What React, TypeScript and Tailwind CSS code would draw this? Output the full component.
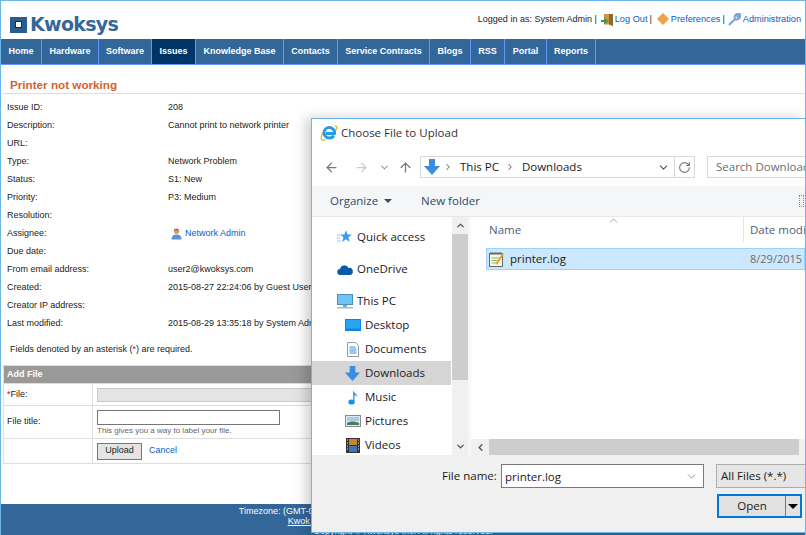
import { ArrowLeft, ArrowRight, ArrowUp, ChevronDown, ChevronLeft, ChevronRight, ChevronUp, RotateCw } from "lucide-react";

const navItems = [
  { label: "Home", width: "w-[41px]" },
  { label: "Hardware", width: "w-[57px]" },
  { label: "Software", width: "w-[53px]" },
  { label: "Issues", width: "w-[44px]", active: true },
  { label: "Knowledge Base", width: "w-[88px]" },
  { label: "Contacts", width: "w-[54px]" },
  { label: "Service Contracts", width: "w-[92px]" },
  { label: "Blogs", width: "w-[41px]" },
  { label: "RSS", width: "w-[34px]" },
  { label: "Portal", width: "w-[42px]" },
  { label: "Reports", width: "w-[49px]" },
];

const issueRows: [string, React.ReactNode][] = [
  ["Issue ID:", "208"],
  ["Description:", "Cannot print to network printer"],
  ["URL:", ""],
  ["Type:", "Network Problem"],
  ["Status:", "S1: New"],
  ["Priority:", "P3: Medium"],
  ["Resolution:", ""],
  ["Assignee:", <AssigneeLink key="assignee" />],
  ["Due date:", ""],
  ["From email address:", "user2@kwoksys.com"],
  ["Created:", "2015-08-27 22:24:06 by Guest User"],
  ["Creator IP address:", ""],
  ["Last modified:", "2015-08-29 13:35:18 by System Admin"],
];

function AssigneeLink() {
  return (
    <span className="flex items-center gap-[3px] pl-[3px] text-[#0b5cc4]">
      <svg width="11" height="12" viewBox="0 0 11 12">
        <circle cx="5.5" cy="3.2" r="2.6" fill="#d39a6e" />
        <path d="M2.700 3C2.500.2 8.500.2 8.300 3L7 2H4Z" fill="#8a4b20" />
        <path d="M.5 11.500C.5 7.500 3 6.500 5.500 6.500S10.500 7.500 10.500 11.500Z" fill="#5c93d6" />
      </svg>
      Network Admin
    </span>
  );
}

function DownloadIcon({ size = 18 }: { size?: number }) {
  return (
    <svg width={size} height={size} viewBox="0 0 18 18">
      <path d="M6 1h6v7h5l-8 9-8-9h5z" fill="#3b8de0" />
    </svg>
  );
}

function IeLogo() {
  return (
    <svg width="18" height="18" viewBox="0 0 18 18">
      <path d="M15 2.500c2.500-1 2.500 1.500.5 4M3 8.500C.3 13 .3 18 5.500 15.500" fill="none" stroke="#f2b632" strokeWidth="1.400" />
      <path d="M13.800 11.500A5.300 5.300 0 1 1 14.500 9.500H6" fill="none" stroke="#2b9be0" strokeWidth="3" />
    </svg>
  );
}

function TreeRow({ icon, label, indent, selected }: { icon: React.ReactNode; label: string; indent?: boolean; selected?: boolean }) {
  return (
    <div className={`mr-[1px] flex h-[24px] shrink-0 items-center ${indent ? "pl-[32px]" : "pl-[24px]"} ${selected ? "bg-[#d5d5d5]" : ""}`}>
      <span className="flex w-[20px] justify-center pr-[3px]">{icon}</span>
      <span className="ml-[1px] text-[#1a1a2a]">{label}</span>
    </div>
  );
}

function FileDialog() {
  return (
    <div className="absolute left-[310px] top-[117px] flex h-[415px] w-[495px] flex-col border border-[#6cb6e8] bg-white font-['Open_Sans',sans-serif] text-[11.5px] text-[#1a1a1a] shadow-[-5px_0_12px_rgba(0,0,0,0.2)]">
      <div className="flex h-[30px] shrink-0 items-center gap-[3px] pb-[2px] pl-[8px] text-[#333]">
        <IeLogo />
        Choose File to Upload
      </div>

      <div className="flex h-[37px] shrink-0 items-center pb-[1px] pl-[12px]">
        <ArrowLeft size={15} strokeWidth={2} className="text-[#777]" />
        <ArrowRight size={15} strokeWidth={2} className="ml-[15px] text-[#ccc]" />
        <ChevronDown size={11} strokeWidth={2.5} className="ml-[10px] text-[#999]" />
        <ArrowUp size={15} strokeWidth={2} className="ml-[8px] text-[#777]" />
        <div className="ml-[7px] flex h-[22px] w-[275px] items-center border border-[#d9d9d9]">
          <span className="ml-[2px]"><DownloadIcon /></span>
          <ChevronRight size={10} strokeWidth={2.5} className="ml-[2px] text-[#777]" />
          <span className="ml-[7px]">This PC</span>
          <ChevronRight size={10} strokeWidth={2.5} className="ml-[6px] text-[#777]" />
          <span className="ml-[7px]">Downloads</span>
          <ChevronDown size={13} strokeWidth={2} className="ml-auto mr-[4px] text-[#555]" />
          <span className="flex h-full w-[20px] items-center justify-center border-l border-[#d9d9d9]">
            <RotateCw size={13} strokeWidth={2} className="text-[#777]" />
          </span>
        </div>
        <div className="ml-[12px] flex h-[22px] flex-1 items-center overflow-hidden whitespace-nowrap border border-r-0 border-[#d9d9d9] pl-[8px] text-[#6d6d6d]">
          Search Downloads
        </div>
      </div>

      <div className="flex h-[31px] shrink-0 items-center border-b border-[#e8e8e8] bg-[#f5f6f7] pl-[18px] text-[#2d4a6a]">
        <span>Organize</span>
        <span className="ml-[6px] h-0 w-0 border-x-[4px] border-t-[4px] border-x-transparent border-t-[#2d4a6a]" />
        <span className="ml-[29px]">New folder</span>
        <span className="ml-auto mr-[1px] h-[12px] w-[5px] border border-dotted border-[#888]" />
      </div>

      <div className="flex min-h-0 flex-1">
        <div className="flex w-[156px] shrink-0">
          <div className="flex w-[140px] flex-col overflow-hidden pt-[8px]">
            <TreeRow
              icon={
                <svg width="15" height="14" viewBox="0 0 15 14">
                  <path d="M9 0l1.500 4.500H15l-3.600 2.800L12.800 12 9 9.200 5 12l1.500-4.700L3 4.500h4.500Z" fill="#3d9be8" />
                  <path d="M0 5h3M0 8h3M0 11h4" stroke="#8cc6f2" />
                </svg>
              }
              label="Quick access"
            />
            <div className="h-[8px] shrink-0" />
            <TreeRow
              icon={
                <svg width="16" height="11" viewBox="0 0 16 11">
                  <path d="M3.500 11A3 3 0 0 1 3 5a4.500 4.500 0 0 1 8.500-1A3.500 3.500 0 0 1 13 11Z" fill="#0c5aa8" />
                </svg>
              }
              label="OneDrive"
            />
            <div className="h-[8px] shrink-0" />
            <TreeRow
              icon={
                <svg width="16" height="15" viewBox="0 0 16 15">
                  <rect x="0.500" y="0.500" width="15" height="10" fill="#6fc4f5" stroke="#4d8fb8" />
                  <rect x="6" y="11" width="4" height="2" fill="#8aa8bd" />
                  <rect x="0" y="13" width="16" height="1.500" fill="#a8bccb" />
                </svg>
              }
              label="This PC"
            />
            <TreeRow
              indent
              icon={
                <svg width="16" height="12" viewBox="0 0 16 12">
                  <rect width="16" height="12" fill="#0f84e4" />
                  <rect x="1" y="1" width="14" height="8.500" fill="#29a4f2" />
                </svg>
              }
              label="Desktop"
            />
            <TreeRow
              indent
              icon={
                <svg width="12" height="15" viewBox="0 0 12 15">
                  <path d="M.5.5h8l3 3v11H.5z" fill="#fff" stroke="#9a9a9a" />
                  <path d="M2.500 5h6M2.500 7h7M2.500 9h7M2.500 11h7" stroke="#3b8de0" />
                </svg>
              }
              label="Documents"
            />
            <TreeRow indent selected icon={<DownloadIcon size={17} />} label="Downloads" />
            <TreeRow
              indent
              icon={
                <svg width="10" height="16" viewBox="0 0 10 16">
                  <ellipse cx="3.500" cy="13" rx="3.200" ry="2.600" fill="#1e8fe6" />
                  <path d="M5.200 13V1c.5 3 4 3.500 4 7.500C8.200 6.500 7 6 6.500 6V13Z" fill="#1e8fe6" />
                </svg>
              }
              label="Music"
            />
            <TreeRow
              indent
              icon={
                <svg width="16" height="12" viewBox="0 0 16 12">
                  <rect x="0.500" y="0.500" width="15" height="11" fill="#dfeaf0" stroke="#8a8a8a" />
                  <rect x="2" y="2" width="12" height="4" fill="#a9cbe6" />
                  <path d="M2 8c3-2 8-2 12 0v2H2Z" fill="#4c7a5c" />
                </svg>
              }
              label="Pictures"
            />
            <TreeRow
              indent
              icon={
                <svg width="14" height="15" viewBox="0 0 14 15">
                  <rect width="14" height="15" fill="#333" />
                  <rect x="3" y="1" width="8" height="6" fill="#c9842f" />
                  <rect x="3" y="8" width="8" height="6" fill="#3b78b8" />
                  <path d="M1 2h1M1 5h1M1 8h1M1 11h1M12 2h1M12 5h1M12 8h1M12 11h1" stroke="#ddd" />
                </svg>
              }
              label="Videos"
            />
          </div>
          <div className="flex w-[16px] flex-col bg-[#f0f0f0]">
            <span className="flex h-[17px] items-center justify-center"><ChevronUp size={11} strokeWidth={3} className="text-[#555]" /></span>
            <span className="h-[146px] bg-[#cdcdcd]" />
            <span className="mt-auto flex h-[17px] items-center justify-center"><ChevronDown size={11} strokeWidth={3} className="text-[#555]" /></span>
          </div>
        </div>

        <div className="flex min-w-0 flex-1 flex-col border-l-[3px] border-[#f7f7f7]">
          <div className="relative flex h-[25px] shrink-0 text-[#4c607a]">
            <ChevronUp size={13} strokeWidth={1.2} className="absolute left-[136px] top-[-3px] text-[#777]" />
            <span className="flex w-[272px] shrink-0 items-center pl-[18px]">Name</span>
            <span className="flex items-center overflow-hidden whitespace-nowrap border-l border-[#e5e5e5] pl-[6px]">Date modified</span>
          </div>
          <div className="ml-[15px] mt-[6px] flex h-[22px] shrink-0 items-center border border-[#99d1ff] bg-[#cce8ff]">
            <span className="flex w-[263px] shrink-0 items-center">
              <svg className="ml-[2px]" width="16" height="16" viewBox="0 0 16 16">
                <rect x="0.500" y="2.500" width="13" height="13" fill="#f8f8ec" stroke="#666" />
                <path d="M2 1v3M4 1v3M6 1v3M8 1v3M10 1v3M12 1v3" stroke="#666" />
                <path d="M2.500 7h8M2.500 9.500h6M2.500 12h5" stroke="#8ab05c" />
                <path d="M7 12l1 2 7-11-1.500-1z" fill="#e3a21a" />
              </svg>
              <span className="ml-[5px]">printer.log</span>
            </span>
            <span className="text-[11px] text-[#6d6d6d]">8/29/2015</span>
          </div>
          <div className="flex-1" />
          <div className="flex h-[16px] shrink-0 items-stretch bg-[#f0f0f0]">
            <span className="flex w-[18px] items-center justify-center"><ChevronLeft size={11} strokeWidth={3} className="text-[#555]" /></span>
            <span className="mr-[6px] flex-1 bg-[#cdcdcd]" />
          </div>
        </div>
      </div>

      <div className="flex h-[77px] shrink-0 flex-col bg-[#f0f0f0] pl-[130px]">
        <div className="mt-[9px] flex items-center">
          <span className="w-[59px]">File name:</span>
          <span className="flex h-[24px] w-[203px] items-center border border-[#7a7a7a] bg-white pl-[3px] pt-[1px]">
            printer.log
            <ChevronDown size={13} strokeWidth={1.2} className="ml-auto mr-[5px] text-[#555]" />
          </span>
          <span className="ml-[12px] flex h-[24px] flex-1 items-center border border-r-0 border-[#adadad] bg-[#e6e6e6] pl-[4px]">All Files (*.*)</span>
        </div>
        <div className="mt-[6px] flex justify-end pr-[3px]">
          <div className="flex h-[24px] w-[85px] items-center border-2 border-[#0078d7] bg-[#e1e1e1]">
            <span className="flex-1 text-center">Open</span>
            <span className="h-full w-[1px] bg-[#777]" />
            <span className="mx-[2px] h-0 w-0 border-x-[5px] border-t-[5px] border-x-transparent border-t-black" />
          </div>
        </div>
      </div>
    </div>
  );
}

export default function App() {
  return (
    <div className="relative flex h-[535px] w-[806px] flex-col overflow-hidden border-x border-t border-[#6cb6e8] bg-white font-['Liberation_Sans',sans-serif] text-[9px] text-[#222]">
      <header className="flex h-[38px] shrink-0 justify-between pl-[9px] pr-[4px]">
        <div className="flex items-center gap-[3px] pt-[9px]">
          <span className="flex h-[16px] w-[17px] items-center justify-center bg-[#2a5d8f]">
            <span className="h-[7px] w-[7px] border border-[#0e2f55] bg-white" />
          </span>
          <span className="font-['DejaVu_Sans',sans-serif] text-[19px] font-bold leading-none tracking-[-0.7px] text-[#34689a]">Kwoksys</span>
        </div>
        <div className="flex items-start pt-[12px] text-[9.2px] leading-[12px]">
          <span className="text-[9px]">Logged in as: System Admin |</span>
          <svg className="ml-[4px]" width="12" height="13" viewBox="0 0 12 13">
            <path d="M3 1h9v12l-4-1.500H3z" fill="#c9963f" />
            <path d="M8 1h4v12l-4-1.500z" fill="#8f6a2c" />
            <path d="M0 7h3V4.500L7 8l-4 3.500V9H0z" fill="#4f8f4a" />
          </svg>
          <a className="ml-[2px] text-[#0b5cc4]">Log Out</a>
          <span className="ml-[2px]">|</span>
          <svg className="ml-[5px]" width="12" height="12" viewBox="0 0 12 12">
            <path d="M6 0l6 6-6 6-6-6z" fill="#eda24a" />
          </svg>
          <a className="ml-[2px] text-[#0b5cc4]">Preferences</a>
          <span className="ml-[2px]">|</span>
          <svg className="ml-[3px]" width="13" height="13" viewBox="0 0 13 13">
            <path d="M1 12l6-6a3.500 3.500 0 0 1 4-5L9 3l1 1 2-2a3.500 3.500 0 0 1-5 4" fill="none" stroke="#7fa3d8" strokeWidth="2" />
          </svg>
          <a className="ml-[2px] text-[#0b5cc4]">Administration</a>
        </div>
      </header>

      <nav className="flex h-[26px] shrink-0 border-b border-[#6699ff] bg-[#336699] text-[9px] font-bold text-white">
        {navItems.map((item) => (
          <span
            key={item.label}
            className={`flex items-center justify-center border-r border-[#6699ff] ${item.width} ${item.active ? "bg-[#003366]" : ""}`}
          >
            {item.label}
          </span>
        ))}
      </nav>

      <main className="flex flex-1 flex-col">
        <h1 className="ml-[2px] mt-[13px] h-[16px] border-b border-[#dddddd] pl-[7px] text-[11.7px] font-bold leading-[14px] text-[#d2642f]">
          Printer not working
        </h1>
        <div className="mt-[5px] flex flex-col pl-[6px]">
          {issueRows.map(([label, value]) => (
            <div key={label} className="flex h-[18px] items-center whitespace-nowrap">
              <span className="w-[161px]">{label}</span>
              <span>{value}</span>
            </div>
          ))}
        </div>
        <p className="ml-[9px] mt-[10px] h-[12px] leading-[12px]">
          Fields denoted by an asterisk (<span className="text-[#e00000]">*</span>) are required.
        </p>

        <div className="ml-[2px] mr-[1px] mt-[10px] border border-[#dddddd]">
          <div className="flex h-[17px] items-center bg-[#999999] pl-[3px] font-bold text-white">Add File</div>
          <div className="flex h-[22px] border-t border-[#dddddd]">
            <span className="flex w-[89px] items-center border-r border-[#dddddd] pl-[3px]">
              <span className="text-[#e00000]">*</span>File:
            </span>
            <span className="flex flex-1 items-center pl-[4px]">
              <span className="h-[14px] w-full border border-[#c8c8c8] bg-[#e4e4e4]" />
            </span>
          </div>
          <div className="flex h-[33px] border-t border-[#dddddd]">
            <span className="flex w-[89px] items-center border-r border-[#dddddd] pl-[3px]">File title:</span>
            <span className="flex flex-col pl-[4px] pt-[4px]">
              <span className="h-[15px] w-[183px] border border-[#767676] bg-white" />
              <span className="mt-[1px] text-[8px] leading-[10px] text-[#666]">This gives you a way to label your file.</span>
            </span>
          </div>
          <div className="flex h-[25px] border-t border-[#dddddd]">
            <span className="w-[89px] border-r border-[#dddddd]" />
            <span className="flex items-center pl-[4px]">
              <span className="flex h-[17px] w-[45px] items-center justify-center border border-[#767676] bg-[#e4e4e4]">Upload</span>
              <a className="ml-[7px] text-[#0b5cc4]">Cancel</a>
            </span>
          </div>
        </div>

        <footer className="mt-auto flex h-[31px] shrink-0 flex-col items-center bg-[#336699] pt-[2px] text-[9px] leading-[10px] text-white">
          <span>Timezone: (GMT-08:00) Pacific Standard Time. Current time: 2015-08-29 13:35:18</span>
          <span className="underline">Kwok Information Systems | About | Documentation | Help</span>
          <span>Copyright © Kwoksys Inc. All rights reserved.</span>
        </footer>
      </main>

      <FileDialog />
    </div>
  );
}
